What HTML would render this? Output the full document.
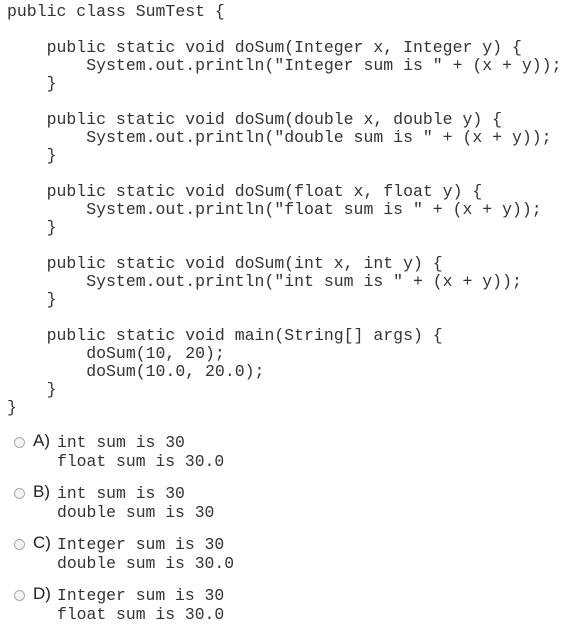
<!DOCTYPE html>
<html><head><style>
body{margin:0;background:#fff;width:570px;height:631px;overflow:hidden;position:relative}
pre{position:absolute;margin:0;font-family:"Liberation Mono",monospace;font-size:16.5px;line-height:18px;color:#333}
.opt{position:absolute;left:0;width:570px;height:40px}
.r{position:absolute;left:14px;top:5px;width:9px;height:9px;border:1px solid #aaa;border-radius:50%;background:#f4f4f4}
.l{position:absolute;left:33px;top:0;font-family:"Liberation Sans",sans-serif;font-size:17px;line-height:18px;color:#222}
.opt pre{left:57px;top:1px;font-size:16.4px;line-height:19px}
</style></head><body>
<pre style="left:7px;top:3px">public class SumTest {

    public static void doSum(Integer x, Integer y) {
        System.out.println("Integer sum is " + (x + y));
    }

    public static void doSum(double x, double y) {
        System.out.println("double sum is " + (x + y));
    }

    public static void doSum(float x, float y) {
        System.out.println("float sum is " + (x + y));
    }

    public static void doSum(int x, int y) {
        System.out.println("int sum is " + (x + y));
    }

    public static void main(String[] args) {
        doSum(10, 20);
        doSum(10.0, 20.0);
    }
}</pre>
<div class="opt" style="top:432px"><div class="r"></div><div class="l">A)</div><pre>int sum is 30
float sum is 30.0</pre></div>
<div class="opt" style="top:483px"><div class="r"></div><div class="l">B)</div><pre>int sum is 30
double sum is 30</pre></div>
<div class="opt" style="top:534px"><div class="r"></div><div class="l">C)</div><pre>Integer sum is 30
double sum is 30.0</pre></div>
<div class="opt" style="top:585px"><div class="r"></div><div class="l">D)</div><pre>Integer sum is 30
float sum is 30.0</pre></div>
</body></html>
